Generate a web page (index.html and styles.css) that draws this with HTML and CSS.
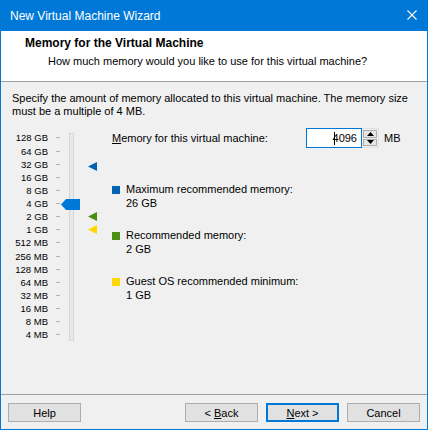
FILE: index.html
```html
<!DOCTYPE html>
<html>
<head>
<meta charset="utf-8">
<link rel="stylesheet" href="styles.css">
</head>
<body>
<div class="window">
  <div class="titlebar">
    <span class="title">New Virtual Machine Wizard</span>
    <svg class="close" width="10" height="10" viewBox="0 0 10 10"><path d="M0.5 0.5 L9.5 9.5 M9.5 0.5 L0.5 9.5" stroke="#fff" stroke-width="1.1" fill="none"/></svg>
  </div>
  <div class="header">
    <div class="h-title">Memory for the Virtual Machine</div>
    <div class="h-sub">How much memory would you like to use for this virtual machine?</div>
  </div>
  <div class="content">
    <p class="desc">Specify the amount of memory allocated to this virtual machine. The memory size must be a multiple of 4&nbsp;MB.</p>
    <div class="main">
      <div class="slider">
        <div class="labels">
          <div>128 GB</div><div>64 GB</div><div>32 GB</div><div>16 GB</div><div>8 GB</div><div>4 GB</div><div>2 GB</div><div>1 GB</div><div>512 MB</div><div>256 MB</div><div>128 MB</div><div>64 MB</div><div>32 MB</div><div>16 MB</div><div>8 MB</div><div>4 MB</div>
        </div>
        <div class="ticks">
          <i></i><i></i><i></i><i></i><i></i><i></i><i></i><i></i><i></i><i></i><i></i><i></i><i></i><i></i><i></i><i></i>
        </div>
        <div class="track"></div>
        <svg class="thumb" width="19" height="11" viewBox="0 0 19 11"><polygon points="0,5.5 5,0 19,0 19,11 5,11" fill="#0078d7"/></svg>
        <svg class="marker m-blue" width="9" height="9" viewBox="0 0 9 9"><polygon points="0,4.5 9,0 9,9" fill="#0063b1"/></svg>
        <svg class="marker m-green" width="9" height="9" viewBox="0 0 9 9"><polygon points="0,4.5 9,0 9,9" fill="#4a8f12"/></svg>
        <svg class="marker m-yellow" width="9" height="9" viewBox="0 0 9 9"><polygon points="0,4.5 9,0 9,9" fill="#ffd800"/></svg>
      </div>
      <div class="right">
        <div class="mem-row">
          <label class="mem-label"><u>M</u>emory for this virtual machine:</label>
          <div class="spin">
            <div class="spin-text"><span class="caret"></span>4096</div>
            <div class="spin-btns">
              <div class="sbtn"><svg width="7" height="4" viewBox="0 0 7 4"><polygon points="0,4 3.5,0 7,4" fill="#000"/></svg></div>
              <div class="sbtn"><svg width="7" height="4" viewBox="0 0 7 4"><polygon points="0,0 7,0 3.5,4" fill="#000"/></svg></div>
            </div>
          </div>
          <span class="unit">MB</span>
        </div>
        <div class="legend">
          <div class="item">
            <span class="sq sq-blue"></span>
            <div class="itext"><div>Maximum recommended memory:</div><div>26 GB</div></div>
          </div>
          <div class="item">
            <span class="sq sq-green"></span>
            <div class="itext"><div>Recommended memory:</div><div>2 GB</div></div>
          </div>
          <div class="item">
            <span class="sq sq-yellow"></span>
            <div class="itext"><div>Guest OS recommended minimum:</div><div>1 GB</div></div>
          </div>
        </div>
      </div>
    </div>
  </div>
  <div class="footer">
    <button class="btn">Help</button>
    <div class="spacer"></div>
    <button class="btn">&lt; <u>B</u>ack</button>
    <button class="btn btn-default"><u>N</u>ext &gt;</button>
    <button class="btn">Cancel</button>
  </div>
</div>
</body>
</html>
```
FILE: styles.css
```css
html, body {
  margin: 0;
  padding: 0;
}
body {
  font-family: "Liberation Sans", Arial, sans-serif;
  font-size: 11px;
  color: #000;
  background: #f0f0f0;
}
.window {
  width: 428px;
  height: 430px;
  box-sizing: border-box;
  border: 1px solid #0078d7;
  border-top: 0;
  display: flex;
  flex-direction: column;
  background: #f0f0f0;
}
.titlebar {
  height: 31px;
  flex: none;
  background: #0078d7;
  color: #fff;
  display: flex;
  align-items: center;
  justify-content: space-between;
  padding-left: 9px;
  padding-right: 10px;
}
.title {
  font-size: 12px;
}
.close {
  display: block;
  margin-top: -1px;
}
.header {
  height: 51px;
  flex: none;
  box-sizing: border-box;
  background: #fff;
  border-bottom: 1px solid #a0a0a0;
  padding: 5px 0 0 24px;
  line-height: 15px;
}
.h-title {
  font-weight: bold;
  font-size: 12px;
}
.h-sub {
  margin-top: 3px;
  padding-left: 23px;
}
.content {
  padding: 10px 11px 0 11px;
}
.desc {
  margin: 0;
  line-height: 13px;
}
.main {
  display: flex;
  margin-top: 10px;
}
.slider {
  position: relative;
  width: 100px;
  height: 214px;
  display: flex;
  flex: none;
}
.labels {
  width: 36px;
  padding-top: 3.4px;
  text-align: right;
  font-size: 9.5px;
  line-height: 13.13px;
}
.ticks {
  margin-left: 8px;
  width: 4px;
  padding-top: 3.4px;
  display: flex;
  flex-direction: column;
}
.ticks i {
  display: block;
  height: 13.13px;
  position: relative;
}
.ticks i::after {
  content: "";
  display: block;
  height: 1px;
  background: #b4b4b4;
  margin-top: 6px;
}
.track {
  margin-left: 9px;
  margin-top: 5px;
  width: 5px;
  height: 208px;
  box-sizing: border-box;
  border: 1px solid #d6d6d6;
  background: #e7eaea;
}
.thumb {
  position: absolute;
  left: 49px;
  top: 71px;
}
.marker {
  position: absolute;
  left: 76px;
}
.m-blue { top: 34px; }
.m-green { top: 84px; }
.m-yellow { top: 97px; }
.right {
  flex: 1;
}
.mem-row {
  display: flex;
  align-items: center;
  height: 20px;
}
.mem-label {
  width: 194px;
}
.spin {
  display: flex;
  height: 20px;
}
.spin-text {
  width: 56px;
  height: 20px;
  box-sizing: border-box;
  border: 1px solid #0078d7;
  background: #fff;
  text-align: right;
  padding-right: 4px;
  line-height: 18px;
  position: relative;
}
.caret {
  position: absolute;
  left: 27px;
  top: 3px;
  width: 1px;
  height: 13px;
  background: #000;
}
.spin-btns {
  width: 17px;
  height: 20px;
  box-sizing: border-box;
  padding: 1px;
  display: flex;
  flex-direction: column;
  gap: 1px;
  background: #f0f0f0;
  border: 1px solid #e0e0e0;
  border-left: 0;
}
.sbtn {
  flex: 1;
  background: #e5e5e5;
  border: 1px solid #adadad;
  display: flex;
  align-items: center;
  justify-content: center;
}
.sbtn svg { display: block; }
.unit {
  margin-left: 5px;
}
.legend {
  margin-top: 34px;
  display: flex;
  flex-direction: column;
  gap: 18px;
}
.item {
  display: flex;
  line-height: 14px;
}
.sq {
  width: 8px;
  height: 8px;
  margin-top: 4px;
  margin-right: 6px;
  flex: none;
}
.sq-blue { background: #0063b1; }
.sq-green { background: #4a8f12; }
.sq-yellow { background: #ffd800; }
.footer {
  margin-top: auto;
  border-top: 1px solid #a0a0a0;
  padding: 8px 7px 7px 7px;
  display: flex;
  gap: 8px;
}
.spacer { flex: 1; }
.btn {
  width: 73px;
  height: 19px;
  box-sizing: border-box;
  background: #e1e1e1;
  border: 1px solid #adadad;
  font-family: "Liberation Sans", Arial, sans-serif;
  font-size: 11px;
  color: #000;
  padding: 0;
  line-height: 16px;
}
.btn-default {
  border: 2px solid #0078d7;
}
```
